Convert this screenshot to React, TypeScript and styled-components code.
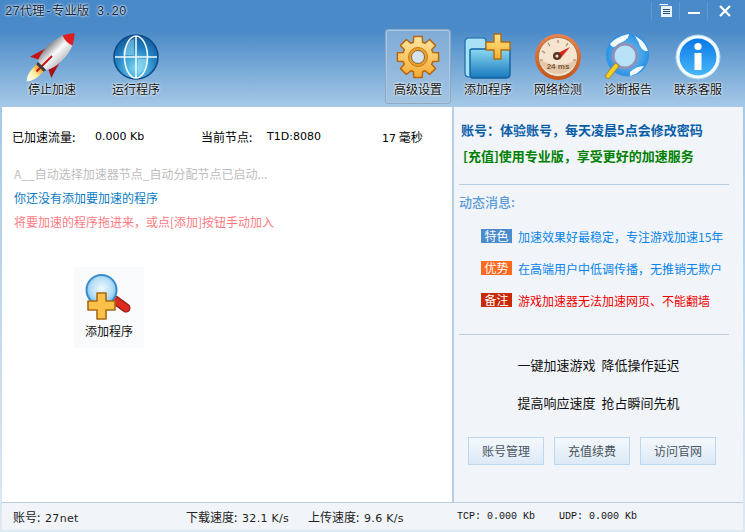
import React from 'react'
import styled, { createGlobalStyle } from 'styled-components'

const cjk = '"Noto Sans CJK SC", "Liberation Sans", sans-serif'

const GlobalStyle = createGlobalStyle`
	html, body {
		margin: 0;
		padding: 0;
		background: #fff;
	}
	* {
		box-sizing: border-box;
	}
`

// 8 tooth cog outline around 0,0
const gearPath = (outer: number, root: number) => {
	const points: string[] = []
	for (let i = 0; i < 8; i++) {
		const mid = (i * Math.PI) / 4 - Math.PI / 2
		const steps: [number, number][] = [
			[root, mid - 0.3],
			[outer, mid - 0.2],
			[outer, mid + 0.2],
			[root, mid + 0.3],
		]
		steps.forEach(([r, a]) => {
			points.push(`${(r * Math.cos(a)).toFixed(1)} ${(r * Math.sin(a)).toFixed(1)}`)
		})
	}
	return `M${points.join(' L')} Z`
}

const RocketIcon = () => (
	<svg width="52" height="50" viewBox="0 0 52 50">
		<defs>
			<linearGradient id="rocketBody" x1="0" y1="0" x2="1" y2="0">
				<stop offset="0" stopColor="#84878c" />
				<stop offset="0.5" stopColor="#fbfbfb" />
				<stop offset="1" stopColor="#c2c4c8" />
			</linearGradient>
			<linearGradient id="rocketFlame" x1="0" y1="0" x2="0" y2="1">
				<stop offset="0" stopColor="#f09a20" />
				<stop offset="0.45" stopColor="#fff0a8" />
				<stop offset="1" stopColor="#ffffff" />
			</linearGradient>
		</defs>
		<g transform="translate(26 24) rotate(45)">
			<path d="M-5 16 Q-6 30 0 36 Q6 30 5 16 Z" fill="url(#rocketFlame)" />
			<path d="M-9 -4 L-15 16 L-7 12 Z" fill="#c0141a" />
			<path d="M9 -4 L15 16 L7 12 Z" fill="#a81218" />
			<path d="M-7 -22 C-12 -10 -11 6 -6 14 H6 C11 6 12 -10 7 -22 Z" fill="url(#rocketBody)" />
			<path d="M-7 -22 Q-4 -28 0 -32 Q4 -28 7 -22 Q0 -19 -7 -22 Z" fill="#dc1e20" />
			<path d="M-1 0 H1 V22 H-1 Z" fill="#c8141a" />
			<path d="M-6 14 H6 L5 17 H-5 Z" fill="#3a3a3a" />
		</g>
	</svg>
)

const GlobeIcon = () => (
	<svg width="46" height="46" viewBox="0 0 46 46">
		<defs>
			<radialGradient id="globeFill" cx="0.5" cy="0.75" r="0.8">
				<stop offset="0" stopColor="#78d8f4" />
				<stop offset="0.55" stopColor="#2484c4" />
				<stop offset="1" stopColor="#0d4f90" />
			</radialGradient>
		</defs>
		<circle cx="23" cy="23" r="22" fill="url(#globeFill)" stroke="#0d4a88" strokeWidth="1.5" />
		<path d="M21 5 C13 8 10 15 10 21 H21 Z M25 25 H35 C35 32 31 37 25 41 Z" fill="#a4e4f6" opacity="0.5" />
		<ellipse cx="23" cy="23" rx="11.5" ry="21" fill="none" stroke="#eefaff" strokeWidth="1.6" />
		<path d="M23 2 V44 M2 23 H44" stroke="#eefaff" strokeWidth="1.6" />
	</svg>
)

const GearIcon = () => (
	<svg width="46" height="46" viewBox="0 0 46 46">
		<defs>
			<linearGradient id="gearFill" x1="0" y1="0" x2="0" y2="1">
				<stop offset="0" stopColor="#ffe8a4" />
				<stop offset="1" stopColor="#f6aa30" />
			</linearGradient>
		</defs>
		<g transform="translate(23 23)">
			<path d={gearPath(21, 15.5)} fill="url(#gearFill)" stroke="#b8660f" strokeWidth="1.5" strokeLinejoin="round" />
			<circle r="9.5" fill="#ee9e28" stroke="#c47a1c" strokeWidth="1" />
			<circle r="6.5" fill="#d6e2ec" stroke="#7d6a4a" />
		</g>
	</svg>
)

const FolderIcon = () => (
	<svg width="48" height="48" viewBox="0 0 48 48">
		<defs>
			<linearGradient id="folderFront" x1="0" y1="0" x2="0" y2="1">
				<stop offset="0" stopColor="#8ad8f2" />
				<stop offset="1" stopColor="#1878bc" />
			</linearGradient>
			<linearGradient id="plusFill" x1="0" y1="0" x2="0" y2="1">
				<stop offset="0" stopColor="#ffe28c" />
				<stop offset="1" stopColor="#f7b02c" />
			</linearGradient>
		</defs>
		<path d="M5 5 H19 Q22 5 22 8 V44 H5 Q1 44 1 40 V9 Q1 5 5 5 Z" fill="#a8e0f6" stroke="#1a6aa8" strokeWidth="1.2" />
		<path d="M8 16 H46 V41 Q46 45 42 45 H9 Q6 45 6 41 V18 Q6 16 8 16 Z" fill="url(#folderFront)" stroke="#10629f" strokeWidth="1.4" />
		<path d="M30 1 H37 V9 H46 V17 H37 V26 H30 V17 H22 V9 H30 Z" fill="url(#plusFill)" stroke="#b06a14" strokeWidth="1.4" strokeLinejoin="round" />
	</svg>
)

const GaugeIcon = () => (
	<svg width="48" height="48" viewBox="0 0 48 48">
		<defs>
			<linearGradient id="gaugeRim" x1="0" y1="0" x2="0" y2="1">
				<stop offset="0" stopColor="#e88450" />
				<stop offset="1" stopColor="#c85414" />
			</linearGradient>
		</defs>
		<circle cx="24" cy="24" r="23" fill="url(#gaugeRim)" />
		<circle cx="24" cy="24" r="19.5" fill="#f4e4d0" stroke="#a56a3a" strokeWidth="0.8" />
		<path d="M5 26 A19.5 19.5 0 0 0 43 26 Q24 38 5 26 Z" fill="#dcb894" opacity="0.65" />
		<g stroke="#a58468" strokeWidth="1.2">
			<path d="M24 7 V10 M14 10 L16 13 M8 18 L11 20 M6 27 H9 M34 10 L32 13 M42 27 H39" />
		</g>
		<path d="M36 14 L24 20 L21 25 L26 26 Z" fill="#d8281e" />
		<circle cx="23" cy="23" r="4" fill="#5b3320" />
		<circle cx="23" cy="23" r="1.6" fill="#f0e0d0" />
		<SmallGaugeText x="24" y="36" textAnchor="middle">24 ms</SmallGaugeText>
	</svg>
)

const LensIcon = () => (
	<svg width="48" height="48" viewBox="0 0 48 48">
		<defs>
			<radialGradient id="lensGlobe" cx="0.5" cy="0.5" r="0.6">
				<stop offset="0" stopColor="#7cc8f4" />
				<stop offset="1" stopColor="#1a86e0" />
			</radialGradient>
		</defs>
		<circle cx="23.5" cy="22" r="21.5" fill="url(#lensGlobe)" />
		<path d="M6 11 C11 5 19 2 25 1 C25 6 19 9 14 11 C11 15 8 15 6 11 Z M31 3 C37 6 42 11 44 18 C40 19 36 15 35 10 Z M26 39 C30 35 35 33 40 33 C36 39 31 42 26 43 Z" fill="#f4fbff" />
		<circle cx="21" cy="23" r="12" fill="#b8e2f8" stroke="#8e92b8" strokeWidth="3" />
		<path d="M12 33 L4 43" stroke="#9a8a50" strokeWidth="6" strokeLinecap="round" />
		<path d="M12 33 L4 43" stroke="#f8d020" strokeWidth="4" strokeLinecap="round" />
	</svg>
)

const InfoIcon = () => (
	<svg width="46" height="46" viewBox="0 0 46 46">
		<defs>
			<linearGradient id="infoFill" x1="0" y1="0" x2="0" y2="1">
				<stop offset="0" stopColor="#0a78e8" />
				<stop offset="1" stopColor="#48b8f8" />
			</linearGradient>
		</defs>
		<circle cx="23" cy="23" r="22" fill="#f4fbff" stroke="#a8d4ee" />
		<circle cx="23" cy="23" r="18.5" fill="url(#infoFill)" />
		<circle cx="23" cy="12.5" r="3.6" fill="#fff" />
		<path d="M19.5 19 H26.5 V36 H19.5 Z" fill="#fff" />
	</svg>
)

const AddLensIcon = () => (
	<svg width="48" height="48" viewBox="0 0 48 48">
		<defs>
			<radialGradient id="addLens" cx="0.5" cy="0.45" r="0.6">
				<stop offset="0" stopColor="#f0f8fe" />
				<stop offset="0.6" stopColor="#b4def6" />
				<stop offset="1" stopColor="#62b4ea" />
			</radialGradient>
		</defs>
		<path d="M30 27 L41 35" stroke="#8c1a14" strokeWidth="9" strokeLinecap="round" />
		<path d="M30 27 L41 35" stroke="#dc2c20" strokeWidth="7" strokeLinecap="round" />
		<circle cx="16.5" cy="17" r="15" fill="url(#addLens)" stroke="#3a8ccc" strokeWidth="2" />
		<path d="M12 20 H21 V28 H30 V37 H21 V46 H12 V37 H3 V28 H12 Z" fill="#fbc04a" stroke="#a86a14" strokeWidth="1.6" strokeLinejoin="round" />
	</svg>
)

const SmallGaugeText = styled.text`
	font-family: "Liberation Sans", sans-serif;
	font-size: 8px;
	font-weight: 700;
	fill: #7a5a40;
`

const toolsLeft = [
	{ label: '停止加速', icon: <RocketIcon /> },
	{ label: '运行程序', icon: <GlobeIcon /> },
]

const toolsRight = [
	{ label: '高级设置', icon: <GearIcon />, active: true },
	{ label: '添加程序', icon: <FolderIcon /> },
	{ label: '网络检测', icon: <GaugeIcon /> },
	{ label: '诊断报告', icon: <LensIcon /> },
	{ label: '联系客服', icon: <InfoIcon /> },
]

const notices = [
	{ tag: '特色', color: '#4a8ccc', text: '加速效果好最稳定，专注游戏加速15年', textColor: '#0a84e8' },
	{ tag: '优势', color: '#ff6a20', text: '在高端用户中低调传播，无推销无欺户', textColor: '#0a84e8' },
	{ tag: '备注', color: '#c82a06', text: '游戏加速器无法加速网页、不能翻墙', textColor: '#f00000' },
]

const App: React.FC = () => {
	return (
		<Window>
			<GlobalStyle />
			<TitleBar>
				<TitleText>27代理-专业版 3.20</TitleText>
				<WindowControls>
					<ControlButton>
						<svg width="14" height="14" viewBox="0 0 14 14">
							<path d="M0.5 0.5 H9" fill="none" stroke="#fff" />
							<path d="M2 2 H13 V13 H2 Z" fill="#e8f0f8" />
							<path d="M4 5.5 H11 M4 7.5 H11 M4 9.5 H11" stroke="#24507c" />
						</svg>
					</ControlButton>
					<ControlButton>
						<svg width="12" height="12" viewBox="0 0 12 12">
							<path d="M0 8 H12" stroke="#fff" strokeWidth="2" />
						</svg>
					</ControlButton>
					<ControlButton $last>
						<svg width="12" height="12" viewBox="0 0 12 12">
							<path d="M1 1 L11 11 M11 1 L1 11" stroke="#fff" strokeWidth="2.2" />
						</svg>
					</ControlButton>
				</WindowControls>
			</TitleBar>
			<Toolbar>
				<ToolGroup $gap={18}>
					{toolsLeft.map((tool) => (
						<ToolButton key={tool.label}>
							<ToolIcon>{tool.icon}</ToolIcon>
							<ToolLabel>{tool.label}</ToolLabel>
						</ToolButton>
					))}
				</ToolGroup>
				<ToolGroup $gap={4}>
					{toolsRight.map((tool) => (
						<ToolButton key={tool.label} $active={tool.active}>
							<ToolIcon>{tool.icon}</ToolIcon>
							<ToolLabel>{tool.label}</ToolLabel>
						</ToolButton>
					))}
				</ToolGroup>
			</Toolbar>
			<Body>
				<MainPanel>
					<StatsRow>
						<StatLabel $width={83}>已加速流量:</StatLabel>
						<StatValue $width={106}>0.000 Kb</StatValue>
						<StatLabel $width={66}>当前节点:</StatLabel>
						<StatValue $width={115}>T1D:8080</StatValue>
						<StatLabel>
							<Latin>17</Latin> 毫秒
						</StatLabel>
					</StatsRow>
					<LogList>
						<LogLine $color="#bdbdbd">A__自动选择加速器节点_自动分配节点已启动...</LogLine>
						<LogLine $color="#0a7cc4">你还没有添加要加速的程序</LogLine>
						<LogLine $color="#ff7a82">将要加速的程序拖进来，或点[添加]按钮手动加入</LogLine>
					</LogList>
					<AddTile>
						<AddLensIcon />
						<AddLabel>添加程序</AddLabel>
					</AddTile>
				</MainPanel>
				<SidePanel>
					<AccountBlock>
						<StrongLine $color="#0a5ea8">账号：体验账号，每天凌晨5点会修改密码</StrongLine>
						<StrongLine $color="#008000" $indent={4}>
							[充值]使用专业版，享受更好的加速服务
						</StrongLine>
					</AccountBlock>
					<NewsBlock>
						<NewsTitle>动态消息:</NewsTitle>
						<NoticeList>
							{notices.map((notice) => (
								<NoticeRow key={notice.tag}>
									<NoticeTag $color={notice.color}>{notice.tag}</NoticeTag>
									<NoticeText $color={notice.textColor}>{notice.text}</NoticeText>
								</NoticeRow>
							))}
						</NoticeList>
					</NewsBlock>
					<Slogans>
						<Slogan>一键加速游戏 降低操作延迟</Slogan>
						<Slogan>提高响应速度 抢占瞬间先机</Slogan>
					</Slogans>
					<ActionRow>
						<ActionButton>账号管理</ActionButton>
						<ActionButton>充值续费</ActionButton>
						<ActionButton>访问官网</ActionButton>
					</ActionRow>
				</SidePanel>
			</Body>
			<StatusBar>
				<StatusItem $width={173}>
					账号: <StatusNumber>27net</StatusNumber>
				</StatusItem>
				<StatusItem $width={122}>
					下载速度: <StatusNumber>32.1 K/s</StatusNumber>
				</StatusItem>
				<StatusItem $width={149}>
					上传速度: <StatusNumber>9.6 K/s</StatusNumber>
				</StatusItem>
				<MonoItem $width={102}>TCP: 0.000 Kb</MonoItem>
				<MonoItem>UDP: 0.000 Kb</MonoItem>
			</StatusBar>
		</Window>
	)
}

const Window = styled.div`
	width: 745px;
	height: 532px;
	display: flex;
	flex-direction: column;
	overflow: hidden;
	font-family: ${cjk};
	font-size: 12px;
	background: linear-gradient(180deg, #4889c9 0, #4a8ac8 30px, #a6c9e6 107px, #dde9f3 532px);
`

const TitleBar = styled.div`
	height: 29px;
	display: flex;
	align-items: flex-start;
	justify-content: space-between;
	padding-left: 5px;
`

const TitleText = styled.div`
	margin-top: 3px;
	font-family: "Liberation Mono", "Noto Sans CJK SC", monospace;
	font-size: 12.4px;
	line-height: 18px;
	color: #10243c;
	text-shadow: 0 0 3px #fff, 0 0 2px #fff;
`

const WindowControls = styled.div`
	display: flex;
	height: 18px;
	margin-top: 2px;
`

const ControlButton = styled.div<{ $last?: boolean }>`
	width: ${(props) => (props.$last ? '38px' : '28px')};
	padding-right: ${(props) => (props.$last ? '4px' : '0')};
	display: flex;
	align-items: center;
	justify-content: center;
	border-left: 1px solid #629ad0;
`

const Toolbar = styled.div`
	height: 75px;
	margin-bottom: 3px;
	display: flex;
	justify-content: space-between;
	padding: 0 14px 0 19px;
`

const ToolGroup = styled.div<{ $gap: number }>`
	display: flex;
	gap: ${(props) => props.$gap}px;
`

const ToolButton = styled.div<{ $active?: boolean }>`
	width: 66px;
	height: 75px;
	padding-top: 2px;
	display: flex;
	flex-direction: column;
	align-items: center;
	border-radius: 3px;
	border: 1px solid ${(props) => (props.$active ? '#8fa9c2' : 'transparent')};
	background: ${(props) => (props.$active ? 'linear-gradient(180deg, #7fabd6, #a2c4e2)' : 'transparent')};
	box-shadow: ${(props) => (props.$active ? 'inset 0 0 0 1px #a8c8e6' : 'none')};
`

const ToolIcon = styled.div`
	height: 50px;
	display: flex;
	align-items: center;
	justify-content: center;
`

const ToolLabel = styled.div`
	line-height: 16px;
	margin-top: -1px;
	white-space: nowrap;
	color: #111;
	text-shadow: 0 0 3px #fff, 0 0 2px #fff;
`

const Body = styled.div`
	flex: 1;
	min-height: 0;
	display: flex;
	margin: 0 2px;
`

const MainPanel = styled.div`
	width: 450px;
	background: #fff;
	padding: 21px 0 0 10px;
`

const StatsRow = styled.div`
	display: flex;
	align-items: center;
	height: 16px;
	color: #000;
	white-space: nowrap;
`

const StatLabel = styled.div<{ $width?: number }>`
	width: ${(props) => (props.$width ? `${props.$width}px` : 'auto')};
`

const StatValue = styled(StatLabel)`
	font-family: "DejaVu Sans", sans-serif;
	font-size: 11px;
`

const Latin = styled.span`
	font-family: "DejaVu Sans", sans-serif;
	font-size: 11px;
`

const StatusNumber = styled(Latin)`
	margin-left: 2px;
	letter-spacing: 0.3px;
`

const LogList = styled.div`
	margin-top: 22px;
	padding-left: 2px;
	display: flex;
	flex-direction: column;
	gap: 8px;
`

const LogLine = styled.div<{ $color: string }>`
	line-height: 16px;
	color: ${(props) => props.$color};
	white-space: nowrap;
`

const AddTile = styled.div`
	width: 70px;
	height: 81px;
	margin: 37px 0 0 62px;
	padding: 6px 0 0 11px;
	background: #f8fafc;
	display: flex;
	flex-direction: column;
`

const AddLabel = styled.div`
	margin-top: 2px;
	line-height: 16px;
	color: #111;
`

const SidePanel = styled.div`
	width: 291px;
	background: #f1f5f9;
	border-left: 2px solid #b9cde1;
	padding: 0 12px 0 5px;
	display: flex;
	flex-direction: column;
`

const AccountBlock = styled.div`
	height: 78px;
	padding-top: 15px;
	border-bottom: 1px solid #b9cde1;
	margin-right: 2px;
	display: flex;
	flex-direction: column;
	gap: 10px;
`

const StrongLine = styled.div<{ $color: string; $indent?: number }>`
	font-size: 13px;
	line-height: 16px;
	font-weight: 700;
	white-space: nowrap;
	color: ${(props) => props.$color};
	padding: 0 0 0 ${(props) => props.$indent ?? 2}px;
`

const NewsBlock = styled.div`
	height: 150px;
	padding-top: 9px;
	border-bottom: 1px solid #b9cde1;
	margin-right: 2px;
`

const NewsTitle = styled.div`
	font-size: 13px;
	line-height: 16px;
	color: #5d9bd6;
	font-weight: 500;
`

const NoticeList = styled.div`
	margin-top: 18px;
	padding-left: 22px;
	display: flex;
	flex-direction: column;
	gap: 16px;
`

const NoticeRow = styled.div`
	display: flex;
	align-items: center;
	gap: 6px;
	height: 16px;
`

const NoticeTag = styled.div<{ $color: string }>`
	width: 31px;
	height: 14px;
	line-height: 14px;
	text-align: center;
	color: #fff;
	background: ${(props) => props.$color};
`

const NoticeText = styled.div<{ $color: string }>`
	white-space: nowrap;
	color: ${(props) => props.$color};
`

const Slogans = styled.div`
	margin-top: 22px;
	padding-left: 7px;
	display: flex;
	flex-direction: column;
	align-items: center;
	gap: 22px;
`

const Slogan = styled.div`
	font-size: 13px;
	line-height: 16px;
	color: #111;
	white-space: pre;
	word-spacing: 3px;
`

const ActionRow = styled.div`
	margin-top: 26px;
	padding-left: 9px;
	display: flex;
	gap: 10px;
`

const ActionButton = styled.div`
	width: 76px;
	height: 28px;
	line-height: 26px;
	text-align: center;
	color: #4a5560;
	border: 1px solid #b8d8f4;
	background: linear-gradient(180deg, #f4f8fc, #dce9f6);
`

const StatusBar = styled.div`
	height: 28px;
	margin: 0 2px 2px;
	padding-left: 11px;
	display: flex;
	align-items: center;
	background: #f1f5f9;
	border-top: 1px solid #b9cde1;
	white-space: nowrap;
	color: #222;
`

const StatusItem = styled.div<{ $width?: number }>`
	width: ${(props) => (props.$width ? `${props.$width}px` : 'auto')};
`

const MonoItem = styled(StatusItem)`
	font-family: "Liberation Mono", monospace;
	font-size: 10px;
	color: #111;
`

export default App
